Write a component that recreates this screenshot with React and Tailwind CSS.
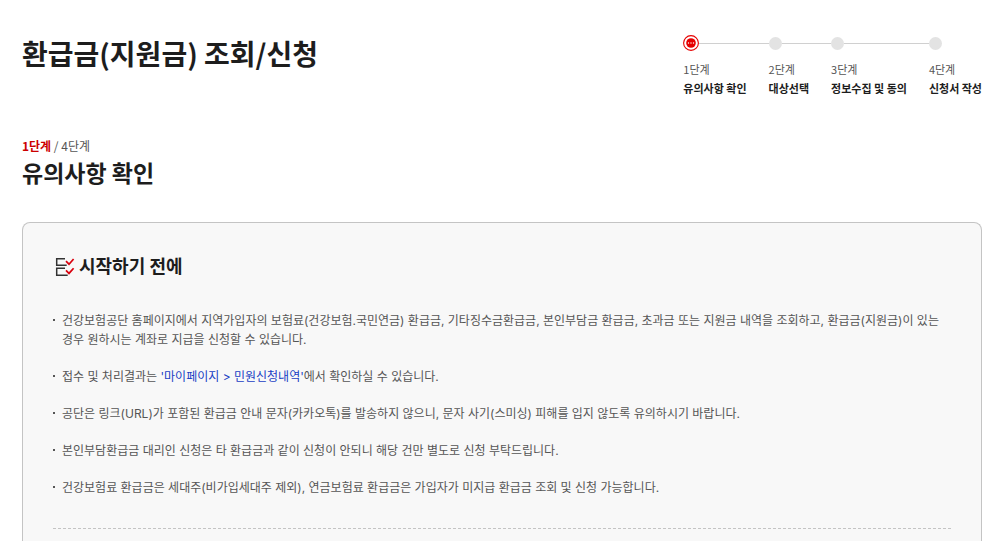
import clsx from 'clsx';

const steps = [
  { id: 1, label: '유의사항 확인' },
  { id: 2, label: '대상선택' },
  { id: 3, label: '정보수집 및 동의' },
  { id: 4, label: '신청서 작성' },
];

function StepList({ current }) {
  return (
    <ol className="flex shrink-0 gap-[22px]">
      {steps.map((step, index) => (
        <li key={step.id} className="text-[11px] whitespace-nowrap">
          <div className={clsx('flex h-4 items-center', index < steps.length - 1 && '-mr-[22px]')}>
            {step.id === current ? (
              <svg className="size-4 shrink-0" viewBox="0 0 16 16" aria-hidden="true">
                <circle cx="8" cy="8" r="7.4" fill="#fff" stroke="#e60000" strokeWidth="1.1" />
                <circle cx="8" cy="8" r="4.8" fill="#e60000" />
                <circle cx="5.5" cy="8" r="0.7" fill="#fff" />
                <circle cx="8" cy="8" r="0.7" fill="#fff" />
                <circle cx="10.5" cy="8" r="0.7" fill="#fff" />
              </svg>
            ) : (
              <span className="size-[13px] shrink-0 rounded-full bg-[#e3e3e3]" />
            )}
            {index < steps.length - 1 && <span className="h-px flex-1 bg-[#d0d0d0]" />}
          </div>
          <p className="mt-[9px] leading-[18px] text-[#555]">{step.id}단계</p>
          <p className="leading-5 font-bold text-[#1d1d1d]">{step.label}</p>
        </li>
      ))}
    </ol>
  );
}

function CheckListIcon() {
  return (
    <svg className="size-5" viewBox="0 0 20 20" fill="none" strokeWidth="1.5" aria-hidden="true">
      <path d="M10 1.7H1.7v6.6h10M10 11.2H1.7v7.1h11" stroke="#333" />
      <path d="M11 4.2l3 3L18.6 2M11 13.4l3 3 4.6-5.2" stroke="#d9000d" strokeWidth="1.7" />
    </svg>
  );
}

function Notice({ children }) {
  return (
    <li className="flex gap-[7px]">
      <span className="mt-2 size-[2px] shrink-0 bg-[#555]" />
      <p>{children}</p>
    </li>
  );
}

export default function App() {
  return (
    <main className="flex min-h-screen flex-col bg-white pr-[18px] pl-[22px] font-['Noto_Sans_CJK_KR',sans-serif] break-keep text-[#1d1d1d]">
      <header className="flex items-start justify-between pt-[35px]">
        <h1 className="text-[28px] leading-9 font-bold">환급금(지원금) 조회/신청</h1>
        <StepList current={1} />
      </header>

      <div className="mt-[38px]">
        <p className="text-xs leading-5 text-[#555]">
          <strong className="font-bold text-[#c00]">1단계</strong> / 4단계
        </p>
        <h2 className="text-[23px] leading-8 font-bold">유의사항 확인</h2>
      </div>

      <section className="mt-[34px] flex-1 rounded-t-lg border border-b-0 border-[#c4c4c4] bg-[#f8f8f8] px-[30px] pt-8 font-['Inter','Noto_Sans_CJK_KR',sans-serif]">
        <h3 className="flex items-center gap-1 pl-[2px] text-lg leading-6 font-bold">
          <CheckListIcon />
          시작하기 전에
        </h3>

        <ul className="mt-8 space-y-[18px] border-b border-dashed border-[#c4c4c4] pb-[31px] text-xs leading-[19px] text-[#555]">
          <Notice>
            건강보험공단 홈페이지에서 지역가입자의 보험료(건강보험.국민연금) 환급금, 기타징수금환급금, 본인부담금 환급금,
            초과금 또는 지원금 내역을 조회하고, 환급금(지원금)이 있는 경우 원하시는 계좌로 지급을 신청할 수 있습니다.
          </Notice>
          <Notice>
            접수 및 처리결과는{' '}
            <a href="#mypage" className="text-[#1a3fc4]">
              '마이페이지 &gt; 민원신청내역'
            </a>
            에서 확인하실 수 있습니다.
          </Notice>
          <Notice>
            공단은 링크(URL)가 포함된 환급금 안내 문자(카카오톡)를 발송하지 않으니, 문자 사기(스미싱) 피해를 입지 않도록
            유의하시기 바랍니다.
          </Notice>
          <Notice>본인부담환급금 대리인 신청은 타 환급금과 같이 신청이 안되니 해당 건만 별도로 신청 부탁드립니다.</Notice>
          <Notice>
            건강보험료 환급금은 세대주(비가입세대주 제외), 연금보험료 환급금은 가입자가 미지급 환급금 조회 및 신청
            가능합니다.
          </Notice>
        </ul>
      </section>
    </main>
  );
}
